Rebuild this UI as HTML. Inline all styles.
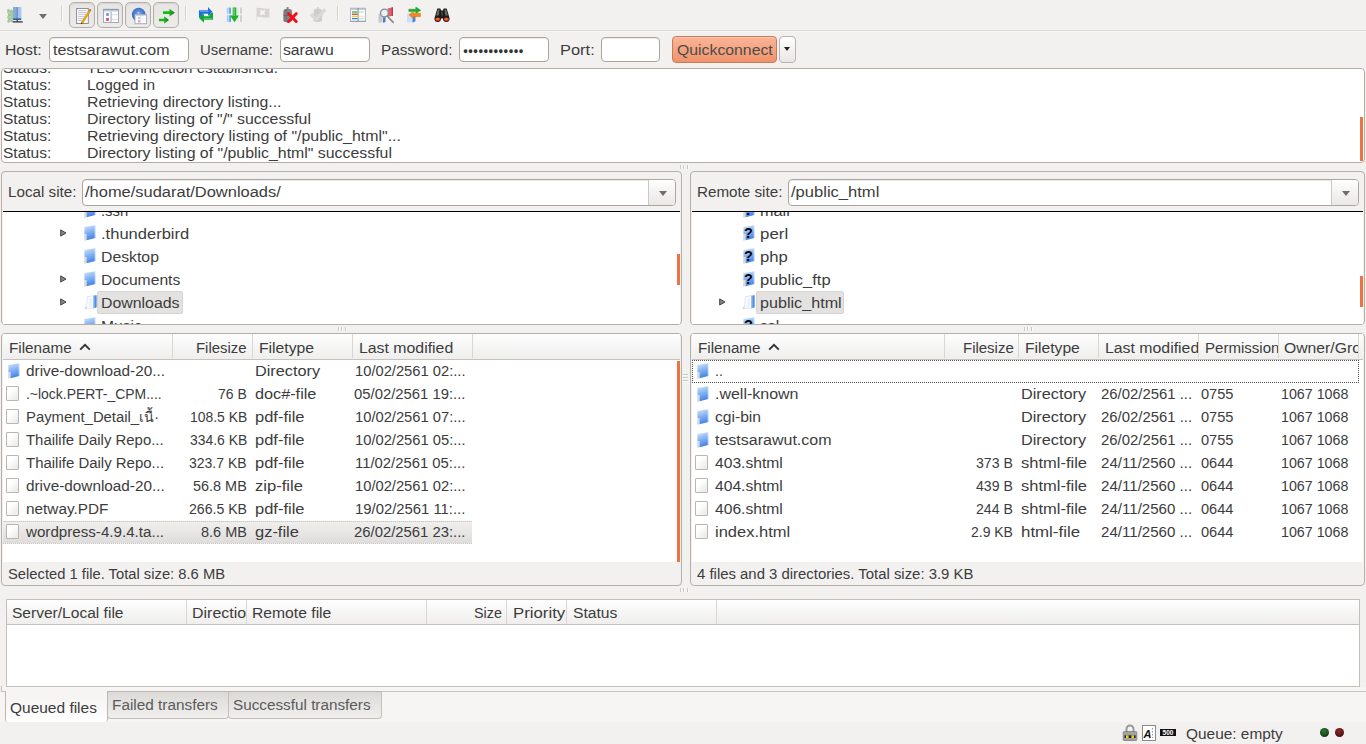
<!DOCTYPE html>
<html><head><meta charset="utf-8"><title>testsarawut.com - FileZilla</title>
<style>
*{box-sizing:border-box;margin:0;padding:0}
html,body{width:1366px;height:744px;overflow:hidden}
body{background:#f2f1f0;font-family:"Liberation Sans","Noto Sans CJK SC",sans-serif;font-size:14px;color:#3c3c3c;position:relative}
.a,.t,.ent,.hdr,.tb,.ico,.fi,.fo,.vsep,.thumb,.panel,.white,.hsep,.clip{position:absolute}
.t{white-space:nowrap;line-height:20px;height:20px;transform-origin:0 50%}
.clip{overflow:hidden;height:22px}
.ent{background:#fff;border:1px solid #aca69e;border-radius:4px;box-shadow:inset 0 1px 1px rgba(0,0,0,.09)}
.panel{border:1px solid #b4afa8;border-radius:4px;background:#f2f1f0}
.white{background:#fff}
.hdr{background:linear-gradient(#fefefe,#efeeed);border-bottom:1px solid #c6c2bd;overflow:hidden}
.hsep{top:0;width:1px;height:24px;background:#dad7d3}
.tb{top:2px;width:26px;height:26px;border:1px solid #b3aea8;border-radius:5px;background:linear-gradient(#e7e5e3,#edebe9);box-shadow:inset 0 1px 2px rgba(0,0,0,.07)}
.vsep{top:6px;width:1px;height:15px;background:#d6d3ce;box-shadow:1px 0 0 #fafaf9}
.ico{width:16px;height:16px;top:7px;overflow:visible}
.thumb{background:#ef7340}
.fi{width:13px;height:15px;border:1px solid #b9b5af;border-radius:1px;background:linear-gradient(135deg,#ffffff 30%,#e9e8e6)}
.fo{width:12px;height:15px}
</style></head><body>
<div id="toolbar">
<div class="a" style="left:0;top:30px;width:1366px;height:1px;background:#dcd9d5"></div><div class="a" style="left:0;top:31px;width:1366px;height:1px;background:#f9f9f8"></div>
<svg class="ico" style="left:7px;top:7px" viewBox="0 0 16 16"><path d="M0.2 2.600l1.500-.900 1.300 1.500 1.700-1 1.600 1.500-.3 2 .9 1.400-.8 1.700.6 1.800-.7 1.600.3 1.700-1.600 1.500-1.400-.9-1.800 1.400-1.300-1.200.9-2.400-1-2 1.100-2.500-1-2.300z" fill="#a3c896"/><path d="M1.300 5.200l2.200 1.600M1.800 10.500l2.500-1.300M3 13.500l1.500-1" stroke="#cfe3c6" stroke-width=".9" fill="none"/><rect x="6.200" y="0" width="8" height="12.900" rx=".7" fill="#9dbde6"/><rect x="6.200" y="0" width="2.800" height="12.900" fill="#86abd9"/><rect x="9.500" y=".2" width="1.300" height="12.500" fill="#4f7fc6"/><rect x="10.800" y=".2" width="3.400" height="12.500" fill="#a9c6ea"/><rect x="6.200" y="11.400" width="8" height="1.600" fill="#2c5ca6"/><rect x="9.600" y="13" width="1.100" height="1.500" fill="#222"/><rect x="5.600" y="14.300" width="10.200" height="1.300" rx=".6" fill="#2b2b2b"/></svg>
<div class="a" style="left:39px;top:14px;width:0;height:0;border-left:4px solid transparent;border-right:4px solid transparent;border-top:5px solid #6e6e6e"></div>
<div class="vsep" style="left:61px"></div>
<div class="tb" style="left:69px"></div>
<div class="tb" style="left:97px"></div>
<div class="tb" style="left:125px"></div>
<div class="tb" style="left:153px"></div>
<svg class="ico" style="left:74px;top:7px" viewBox="0 0 16 16"><rect x="2.600" y="1.500" width="11.700" height="15" fill="#fff" stroke="#8e8e8e" stroke-width="1"/><path d="M4.200 3.600h8.500M4.200 5.500h8.500M4.200 7.400h8M4.200 9.400h7M4.200 11.400h6M4.200 13.400h4.800" stroke="#b9bcd2" stroke-width=".9"/><path d="M15.300 2.900l1.400.8L9 16.200l-1.900.8.400-1.900z" fill="#f7ad08" stroke="#b8810f" stroke-width=".5"/><path d="M15.100 3.200l1.500.9.700-1.300-1.400-.9z" fill="#d8431f"/><path d="M7 17.100l1.700-.7-1.200-1.100z" fill="#3a2a10"/></svg>
<svg class="ico" style="left:102px;top:7px" viewBox="0 0 16 16"><rect x="1.500" y="2.300" width="15" height="13.200" fill="#fff" stroke="#a2abbf" stroke-width="1"/><rect x="1.200" y="2" width="15.600" height="1.600" fill="#8f9cb6"/><rect x="2" y="3.600" width="14" height=".9" fill="#c3cbd9"/><rect x="8.400" y="4.500" width="1.400" height="10.800" fill="#b4bccb"/><rect x="9.800" y="7.300" width="6.200" height=".9" fill="#d5d8df"/><rect x="9.800" y="12.200" width="6.200" height=".9" fill="#d5d8df"/><rect x="1.200" y="15" width="15.600" height=".9" fill="#a2abbf"/><rect x="4.100" y="6.100" width="2.800" height="2.800" fill="#6a9fdb"/><rect x="4.100" y="11" width="2.800" height="2.900" fill="#dc5364"/></svg>
<svg class="ico" style="left:130px;top:7px" viewBox="0 0 16 16"><defs><radialGradient id="gl" cx=".5" cy=".45" r=".6"><stop offset="0" stop-color="#86acea"/><stop offset="1" stop-color="#1f55bd"/></radialGradient></defs><circle cx="8.700" cy="7.600" r="6.800" fill="url(#gl)"/><path d="M7.500 5.200l2 .3-1 1.500z" fill="#e9f0fb"/><rect x="5" y="7.600" width="11.600" height="9.100" fill="#fff" stroke="#a3adc2" stroke-width="1"/><rect x="5.500" y="8" width="10.600" height="1.100" fill="#cdd4e1"/><rect x="10.300" y="9" width=".9" height="7.300" fill="#d2d7e1"/><rect x="8.300" y="10" width="1.300" height="2.200" fill="#86aee2"/><rect x="8.300" y="13.200" width="1.300" height="2.400" fill="#ea6a78"/><rect x="11.800" y="11" width="3.800" height=".6" fill="#dcdfe6"/><rect x="11.800" y="13.600" width="3.800" height=".6" fill="#dcdfe6"/></svg>
<svg class="ico" style="left:158px;top:7px" viewBox="0 0 16 16"><defs><linearGradient id="ga" x1="0" x2="1"><stop offset="0" stop-color="#08c808"/><stop offset=".6" stop-color="#1eb01e"/><stop offset="1" stop-color="#1a6f1a"/></linearGradient></defs><path d="M5 4.300h6.500V1.800l5.300 3.900-5.300 3.900V7.100H5z" fill="url(#ga)"/><path d="M.9 11.700h5.300V9.200l4.800 3.800-4.800 3.800v-2.500H.9z" fill="url(#ga)"/></svg>
<div class="vsep" style="left:185px"></div>
<svg class="ico" style="left:198px;top:7px" viewBox="0 0 16 16"><path d="M1 10.700V3.200h9V0l4.300 4.700L10 9V6.700H4.700v2.200z" fill="#1c6fe4"/><path d="M2 4.200h8.500" stroke="#6aa5f2" stroke-width="1.200"/><path d="M15 5.300v7.500H6v3L1 11.100l5-4.500v2.700h5.300V7z" fill="#12a637"/><path d="M6 11.800h8" stroke="#56d070" stroke-width="1.200"/></svg>
<svg class="ico" style="left:226px;top:7px" viewBox="0 0 16 16"><rect x="0" y=".6" width="5.400" height="14.400" fill="#e4eefa"/><rect x="1.200" y=".6" width="1.300" height="14.400" fill="#9cc2ee"/><rect x="3.300" y=".6" width="1.500" height="14.400" fill="#4f8fe0"/><rect x="11" y=".6" width="5" height="14.400" fill="#f4f4f4"/><rect x="11.400" y=".6" width="1.100" height="14.400" fill="#dcdcdc"/><rect x="14.300" y=".6" width="1.400" height="14.400" fill="#c2c2c2"/><rect x="0" y="6.800" width="16" height="1.400" fill="#f2f1f0"/><path d="M6.700.6h3.600v7.800h2.600L8.500 15.300 4 8.400h2.700z" fill="#1cb526"/><path d="M7.500 1h1.200v8H7.500z" fill="#6fe07a"/></svg>
<svg class="ico" style="left:254px;top:7px" viewBox="0 0 16 16"><path d="M2.200 1.200c3-1.300 5.800 1.300 13 .4l.3 8.600c-6 1.400-9.800-1.500-13-.1z" fill="#d6d3d0"/><path d="M2.500 1v13.500" stroke="#e6e4e2" stroke-width="1"/><path d="M6.200 3.400l4.600 4.400M10.800 3.400L6.200 7.800" stroke="#f6f5f4" stroke-width="1.900"/></svg>
<svg class="ico" style="left:282px;top:7px" viewBox="0 0 16 16"><rect x="4.600" y="0" width="2" height="2.500" fill="#8a8a8a"/><path d="M1.600 4.500c0-2 1.500-2.700 4.200-2.700s4.300.7 4.300 2.700v8.700c0 1.300-1 1.800-4.300 1.800s-4.200-.5-4.200-1.800z" fill="#868686"/><path d="M1.600 4.500c0-2 1.500-2.700 4.200-2.700v13.200c-3.200 0-4.200-.5-4.200-1.800z" fill="#7a7a7a"/><rect x="1.600" y="8" width="8.500" height=".9" fill="#666"/><rect x="4.800" y="15" width="1.600" height=".8" fill="#777"/><path d="M6.600 6.700l7.600 7.800M14.200 6.700l-7.600 7.800" stroke="#ee0f1a" stroke-width="3" stroke-linecap="round"/></svg>
<svg class="ico" style="left:310px;top:7px" viewBox="0 0 16 16"><rect x="7" y="0" width="1.800" height="2.300" fill="#d3d1ce"/><path d="M3.600 4.200c0-1.800 1.400-2.400 4.200-2.400s4.300.6 4.300 2.400v9c0 1.200-1 1.700-4.300 1.700s-4.200-.5-4.200-1.700z" fill="#d0cecb"/><path d="M0 8.300l2.300-1.800L6 10 14 1.800l2 1.700-9.600 11z" fill="#dddbd8" stroke="#cfcdca" stroke-width=".5"/></svg>
<div class="vsep" style="left:337px"></div>
<svg class="ico" style="left:350px;top:7px" viewBox="0 0 16 16"><rect x=".6" y="1.200" width="14.800" height="13.200" fill="#fff" stroke="#a9b0c0" stroke-width=".9"/><rect x=".2" y="13.800" width="15.600" height="1" fill="#8f98ab"/><rect x="1" y="1.400" width="14" height="1.300" fill="#aeb6c8"/><rect x="7.600" y="1" width="1" height="13.500" fill="#7d8699"/><path d="M2 5h5.500" stroke="#2dbb3a" stroke-width="1.300"/><path d="M8.600 5H14" stroke="#bfe8c2" stroke-width="1.300"/><path d="M2 7.200h5.500" stroke="#e23a3a" stroke-width="1.300"/><path d="M2 9.400h5.500" stroke="#f2d21e" stroke-width="1.300"/><path d="M8.600 9.400H14" stroke="#f7eaa0" stroke-width="1.300"/><path d="M2 11.600h5.500" stroke="#2f7fe8" stroke-width="1.300"/><path d="M8.600 11.600H14" stroke="#c5dbf7" stroke-width="1.300"/></svg>
<svg class="ico" style="left:378px;top:7px" viewBox="0 0 16 16"><path d="M9.500 1.500l5.500-1.300v8.600l-5.500 1z" fill="#e0646f"/><path d="M13.500.6L15 .2v8.600l-1.500.3z" fill="#b93a48"/><path d="M.5 7l4-2v10.500l-4 .3z" fill="#c9c9c9"/><path d="M5 10.500l2.500-.5v5l-2.500.8z" fill="#3f7fd6"/><circle cx="6.400" cy="6" r="3.900" fill="#e6f0fa" fill-opacity=".85" stroke="#8a8a8a" stroke-width="1.200"/><path d="M9.200 9l6 6.300" stroke="#8a8a8a" stroke-width="1.700" stroke-linecap="round"/></svg>
<svg class="ico" style="left:406px;top:7px" viewBox="0 0 16 16"><path d="M1 6.500l5.500-1.500v10l-5.500.8z" fill="#cddff5"/><path d="M6.500 9l3-.8v6l-3 1.600z" fill="#4a86d8"/><path d="M2.800 2.200h7V0l5 3.300-5 3.300V4.500h-7z" fill="#22ad2f" stroke="#0f8a1a" stroke-width=".4"/><path d="M14.500 6.300v3.400h-7v2.100L3 8l4.500-3.600v1.900z" fill="#f08a1d" stroke="#c96c0c" stroke-width=".4"/></svg>
<svg class="ico" style="left:434px;top:7px" viewBox="0 0 16 16"><path d="M3.300 1.500h3l.9 2h1.600l.9-2h3l2.800 9.500c.5 2.600-1 4-3.200 4s-3.500-1.300-3.300-3.500H7c.2 2.200-1.100 3.500-3.300 3.500S0 13.600.5 11z" fill="#1d1d1d"/><path d="M3.800 2.500h1.700l-.8 6h-2.500zM10.500 2.500h1.700l1.600 6h-2.500z" fill="#6a6a6a"/><path d="M7 4.500h2v4H7z" fill="#3a3a3a"/><ellipse cx="3.700" cy="12.300" rx="2.500" ry="1.800" fill="#e8381c"/><ellipse cx="12.300" cy="12.300" rx="2.500" ry="1.800" fill="#e8381c"/><ellipse cx="3.700" cy="12" rx="1.400" ry=".8" fill="#f5813a"/><ellipse cx="12.300" cy="12" rx="1.400" ry=".8" fill="#f5813a"/></svg>
</div>
<div id="quick">
<div class="t" style="left:5.13px;top:40.00px;transform:scaleX(1.1237);">Host:</div><div class="ent" style="left:49px;top:37px;width:140px;height:25px"></div>
<div class="t" style="left:52.62px;top:40.00px;transform:scaleX(1.1435);">testsarawut.com</div><div class="t" style="left:199.88px;top:40.00px;transform:scaleX(1.0653);">Username:</div><div class="ent" style="left:280px;top:37px;width:90px;height:25px"></div>
<div class="t" style="left:283.03px;top:40.00px;transform:scaleX(1.1238);">sarawu</div><div class="t" style="left:380.76px;top:40.00px;transform:scaleX(1.0921);">Password:</div><div class="ent" style="left:459px;top:37px;width:90px;height:25px"></div>
<div class="t" style="left:463.24px;top:41.48px;transform:scaleX(0.9277);font-size:9px;color:#333;">●●●●●●●●●●●●</div><div class="t" style="left:559.80px;top:40.00px;transform:scaleX(1.1734);">Port:</div><div class="ent" style="left:601px;top:37px;width:59px;height:25px"></div>
<div class="a" style="left:672px;top:36px;width:105px;height:27px;border:1px solid #c67b5c;border-radius:4px;background:linear-gradient(#fbb597,#f0936b);box-shadow:inset 0 1px 0 rgba(255,255,255,.25)"></div>
<div class="t" style="left:677.13px;top:40.00px;transform:scaleX(1.1286);color:#4c4c4c;">Quickconnect</div><div class="a" style="left:779px;top:36px;width:17px;height:27px;border:1px solid #b9b4ad;border-radius:4px;background:linear-gradient(#fefefe,#e9e7e5)"></div>
<div class="a" style="left:784px;top:47px;width:0;height:0;border-left:3.500px solid transparent;border-right:3.500px solid transparent;border-top:4.500px solid #222"></div>
</div>
<div id="log">
<div class="a" style="left:1px;top:68px;width:1364px;height:95px;border:1px solid #b3aea7;border-radius:4px;background:#fff"></div>
<div class="a" style="left:2px;top:69px;width:1358px;height:11px;overflow:hidden"><div class="t" style="left:0.85px;top:-11.00px;transform:scaleX(1.1081);">Status:</div></div><div class="a" style="left:2px;top:69px;width:1358px;height:11px;overflow:hidden"><div class="t" style="left:84.96px;top:-11.00px;transform:scaleX(1.0852);">TLS connection established.</div></div>
<div class="t" style="left:2.85px;top:75.00px;transform:scaleX(1.1081);">Status:</div><div class="t" style="left:86.95px;top:75.00px;transform:scaleX(1.1054);">Logged in</div>
<div class="t" style="left:2.85px;top:92.00px;transform:scaleX(1.1081);">Status:</div><div class="t" style="left:86.93px;top:92.00px;transform:scaleX(1.1308);">Retrieving directory listing...</div>
<div class="t" style="left:2.85px;top:109.00px;transform:scaleX(1.1081);">Status:</div><div class="t" style="left:86.93px;top:109.00px;transform:scaleX(1.1297);">Directory listing of &quot;/&quot; successful</div>
<div class="t" style="left:2.85px;top:126.00px;transform:scaleX(1.1081);">Status:</div><div class="t" style="left:86.92px;top:126.00px;transform:scaleX(1.1372);">Retrieving directory listing of &quot;/public_html&quot;...</div>
<div class="t" style="left:2.85px;top:143.00px;transform:scaleX(1.1081);">Status:</div><div class="t" style="left:86.93px;top:143.00px;transform:scaleX(1.1334);">Directory listing of &quot;/public_html&quot; successful</div>
<div class="thumb" style="left:1360px;top:117px;width:3px;height:44px"></div>
</div>
<div id="local">
<div class="panel" style="left:1px;top:171px;width:681px;height:154px"></div>
<div class="t" style="left:7.66px;top:182.00px;transform:scaleX(1.0861);">Local site:</div><div class="ent" style="left:82px;top:179px;width:594px;height:27px"></div>
<div class="a" style="left:648px;top:180px;width:27px;height:25px;border-left:1px solid #cbc7c2;border-radius:0 3px 3px 0;background:linear-gradient(#fefefe,#eae8e6)"></div>
<div class="a" style="left:659px;top:191px;width:0;height:0;border-left:4px solid transparent;border-right:4px solid transparent;border-top:5px solid #6e6e6e"></div>
<div class="t" style="left:85.09px;top:182.00px;transform:scaleX(1.1757);">/home/sudarat/Downloads/</div><div class="white" style="left:3px;top:211px;width:677px;height:113px;border-top:1px solid #000"></div>
<div class="a" style="left:3px;top:212px;width:677px;height:112px;overflow:hidden">
<svg class="fo" style="left:80.5px;top:-10px;height:16px" viewBox="0 0 12 16"><defs><linearGradient id="g1" x1="0" y1="0" x2=".25" y2="1"><stop offset="0" stop-color="#d4e6fc"/><stop offset=".45" stop-color="#8fbaf4"/><stop offset="1" stop-color="#4585e6"/></linearGradient></defs><path d="M0 15.700L.4 9l2.300.4v5.900z" fill="#d9d9d9"/><path d="M.4 2.100L11.300.3V13L2.600 15.300V9.300L.4 9z" fill="url(#g1)"/><path d="M10 .5l1.300-.2V13l-1.300.35z" fill="#fff" fill-opacity=".22"/></svg>
<svg class="fo" style="left:80.5px;top:13px;height:16px" viewBox="0 0 12 16"><defs><linearGradient id="g2" x1="0" y1="0" x2=".25" y2="1"><stop offset="0" stop-color="#d4e6fc"/><stop offset=".45" stop-color="#8fbaf4"/><stop offset="1" stop-color="#4585e6"/></linearGradient></defs><path d="M0 15.700L.4 9l2.300.4v5.900z" fill="#d9d9d9"/><path d="M.4 2.100L11.300.3V13L2.600 15.300V9.300L.4 9z" fill="url(#g2)"/><path d="M10 .5l1.300-.2V13l-1.300.35z" fill="#fff" fill-opacity=".22"/></svg>
<svg class="a" style="left:56.5px;top:16.5px;width:7px;height:8px" viewBox="0 0 7 8"><path d="M0.700.9L6 4 .7 7.100z" fill="#858585" stroke="#444" stroke-width="1"/></svg>
<svg class="fo" style="left:80.5px;top:36px;height:16px" viewBox="0 0 12 16"><defs><linearGradient id="g3" x1="0" y1="0" x2=".25" y2="1"><stop offset="0" stop-color="#d4e6fc"/><stop offset=".45" stop-color="#8fbaf4"/><stop offset="1" stop-color="#4585e6"/></linearGradient></defs><path d="M0 15.700L.4 9l2.300.4v5.900z" fill="#d9d9d9"/><path d="M.4 2.100L11.300.3V13L2.600 15.300V9.300L.4 9z" fill="url(#g3)"/><path d="M10 .5l1.300-.2V13l-1.300.35z" fill="#fff" fill-opacity=".22"/></svg>
<svg class="fo" style="left:80.5px;top:59px;height:16px" viewBox="0 0 12 16"><defs><linearGradient id="g4" x1="0" y1="0" x2=".25" y2="1"><stop offset="0" stop-color="#d4e6fc"/><stop offset=".45" stop-color="#8fbaf4"/><stop offset="1" stop-color="#4585e6"/></linearGradient></defs><path d="M0 15.700L.4 9l2.300.4v5.900z" fill="#d9d9d9"/><path d="M.4 2.100L11.300.3V13L2.600 15.300V9.300L.4 9z" fill="url(#g4)"/><path d="M10 .5l1.300-.2V13l-1.300.35z" fill="#fff" fill-opacity=".22"/></svg>
<svg class="a" style="left:56.5px;top:62.5px;width:7px;height:8px" viewBox="0 0 7 8"><path d="M0.700.9L6 4 .7 7.100z" fill="#858585" stroke="#444" stroke-width="1"/></svg>
<div class="a" style="left:94px;top:79px;width:86px;height:23px;background:#e3e2e0;border:1px solid #d6d4d1;border-radius:2px"></div>
<svg class="fo" style="left:81px;top:83px;width:13px" viewBox="0 0 13 15"><path d="M0 13.600l2.300-2.400.5 2.900z" fill="#c9ced8"/><path d="M2.300 13.900L3.400 1.700 9.500.5v12.600z" fill="#fbfcfe" stroke="#d0d6e2" stroke-width=".6"/><path d="M5 3l3-.6v9.800l-3.400.6z" fill="#eef2f9"/><path d="M9.300.7l3.200-.5v12l-3.200 1.300z" fill="#7fb0f0"/><path d="M10.800.4l1.700-.2v12l-1.700.7z" fill="#4f8de6"/></svg>
<svg class="a" style="left:56.5px;top:85.5px;width:7px;height:8px" viewBox="0 0 7 8"><path d="M0.700.9L6 4 .7 7.100z" fill="#858585" stroke="#444" stroke-width="1"/></svg>
<svg class="fo" style="left:80.5px;top:105px;height:16px" viewBox="0 0 12 16"><defs><linearGradient id="g5" x1="0" y1="0" x2=".25" y2="1"><stop offset="0" stop-color="#d4e6fc"/><stop offset=".45" stop-color="#8fbaf4"/><stop offset="1" stop-color="#4585e6"/></linearGradient></defs><path d="M0 15.700L.4 9l2.300.4v5.900z" fill="#d9d9d9"/><path d="M.4 2.100L11.300.3V13L2.600 15.300V9.300L.4 9z" fill="url(#g5)"/><path d="M10 .5l1.300-.2V13l-1.300.35z" fill="#fff" fill-opacity=".22"/></svg>
</div>
<div class="a" style="left:3px;top:212px;width:677px;height:112px;overflow:hidden"><div class="t" style="left:97.98px;top:-11.00px;transform:scaleX(1.0602);">.ssh</div></div><div class="a" style="left:3px;top:212px;width:677px;height:112px;overflow:hidden"><div class="t" style="left:97.89px;top:12.00px;transform:scaleX(1.1807);">.thunderbird</div></div><div class="a" style="left:3px;top:212px;width:677px;height:112px;overflow:hidden"><div class="t" style="left:97.93px;top:35.00px;transform:scaleX(1.1281);">Desktop</div></div><div class="a" style="left:3px;top:212px;width:677px;height:112px;overflow:hidden"><div class="t" style="left:97.94px;top:58.00px;transform:scaleX(1.1202);">Documents</div></div><div class="a" style="left:3px;top:212px;width:677px;height:112px;overflow:hidden"><div class="t" style="left:97.93px;top:81.00px;transform:scaleX(1.1340);">Downloads</div></div><div class="a" style="left:3px;top:212px;width:677px;height:112px;overflow:hidden"><div class="t" style="left:97.94px;top:104.00px;transform:scaleX(1.1193);">Music</div></div><div class="thumb" style="left:677px;top:254px;width:3px;height:31px"></div>
</div>
<div id="remote">
<div class="panel" style="left:690px;top:171px;width:675px;height:154px"></div>
<div class="t" style="left:696.66px;top:182.00px;transform:scaleX(1.0863);">Remote site:</div><div class="ent" style="left:788px;top:179px;width:571px;height:27px"></div>
<div class="a" style="left:1331px;top:180px;width:27px;height:25px;border-left:1px solid #cbc7c2;border-radius:0 3px 3px 0;background:linear-gradient(#fefefe,#eae8e6)"></div>
<div class="a" style="left:1342px;top:191px;width:0;height:0;border-left:4px solid transparent;border-right:4px solid transparent;border-top:5px solid #6e6e6e"></div>
<div class="t" style="left:791.09px;top:182.00px;transform:scaleX(1.1823);">/public_html</div><div class="white" style="left:692px;top:211px;width:671px;height:113px;border-top:1px solid #000"></div>
<div class="a" style="left:692px;top:212px;width:671px;height:112px;overflow:hidden">
<svg class="fo" style="left:50.60000000000002px;top:-10px;height:16px" viewBox="0 0 12 16"><defs><linearGradient id="g6" x1="0" y1="0" x2=".25" y2="1"><stop offset="0" stop-color="#d4e6fc"/><stop offset=".45" stop-color="#8fbaf4"/><stop offset="1" stop-color="#4585e6"/></linearGradient></defs><path d="M0 15.700L.4 9l2.300.4v5.900z" fill="#d9d9d9"/><path d="M.4 2.100L11.300.3V13L2.600 15.300V9.300L.4 9z" fill="url(#g6)"/><path d="M10 .5l1.300-.2V13l-1.300.35z" fill="#fff" fill-opacity=".22"/><text x="5.500" y="13.300" font-family="Liberation Sans,sans-serif" font-weight="bold" font-size="14.500" text-anchor="middle" fill="#050505">?</text></svg>
<svg class="fo" style="left:50.60000000000002px;top:13px;height:16px" viewBox="0 0 12 16"><defs><linearGradient id="g7" x1="0" y1="0" x2=".25" y2="1"><stop offset="0" stop-color="#d4e6fc"/><stop offset=".45" stop-color="#8fbaf4"/><stop offset="1" stop-color="#4585e6"/></linearGradient></defs><path d="M0 15.700L.4 9l2.300.4v5.900z" fill="#d9d9d9"/><path d="M.4 2.100L11.300.3V13L2.600 15.300V9.300L.4 9z" fill="url(#g7)"/><path d="M10 .5l1.300-.2V13l-1.300.35z" fill="#fff" fill-opacity=".22"/><text x="5.500" y="13.300" font-family="Liberation Sans,sans-serif" font-weight="bold" font-size="14.500" text-anchor="middle" fill="#050505">?</text></svg>
<svg class="fo" style="left:50.60000000000002px;top:36px;height:16px" viewBox="0 0 12 16"><defs><linearGradient id="g8" x1="0" y1="0" x2=".25" y2="1"><stop offset="0" stop-color="#d4e6fc"/><stop offset=".45" stop-color="#8fbaf4"/><stop offset="1" stop-color="#4585e6"/></linearGradient></defs><path d="M0 15.700L.4 9l2.300.4v5.900z" fill="#d9d9d9"/><path d="M.4 2.100L11.300.3V13L2.600 15.300V9.300L.4 9z" fill="url(#g8)"/><path d="M10 .5l1.300-.2V13l-1.300.35z" fill="#fff" fill-opacity=".22"/><text x="5.500" y="13.300" font-family="Liberation Sans,sans-serif" font-weight="bold" font-size="14.500" text-anchor="middle" fill="#050505">?</text></svg>
<svg class="fo" style="left:50.60000000000002px;top:59px;height:16px" viewBox="0 0 12 16"><defs><linearGradient id="g9" x1="0" y1="0" x2=".25" y2="1"><stop offset="0" stop-color="#d4e6fc"/><stop offset=".45" stop-color="#8fbaf4"/><stop offset="1" stop-color="#4585e6"/></linearGradient></defs><path d="M0 15.700L.4 9l2.300.4v5.900z" fill="#d9d9d9"/><path d="M.4 2.100L11.300.3V13L2.600 15.300V9.300L.4 9z" fill="url(#g9)"/><path d="M10 .5l1.300-.2V13l-1.300.35z" fill="#fff" fill-opacity=".22"/><text x="5.500" y="13.300" font-family="Liberation Sans,sans-serif" font-weight="bold" font-size="14.500" text-anchor="middle" fill="#050505">?</text></svg>
<div class="a" style="left:64px;top:79px;width:88px;height:23px;background:#e3e2e0;border:1px solid #d6d4d1;border-radius:2px"></div>
<svg class="fo" style="left:50px;top:83px;width:13px" viewBox="0 0 13 15"><path d="M0 13.600l2.300-2.400.5 2.900z" fill="#c9ced8"/><path d="M2.300 13.900L3.400 1.700 9.500.5v12.600z" fill="#fbfcfe" stroke="#d0d6e2" stroke-width=".6"/><path d="M5 3l3-.6v9.800l-3.400.6z" fill="#eef2f9"/><path d="M9.300.7l3.200-.5v12l-3.200 1.300z" fill="#7fb0f0"/><path d="M10.800.4l1.700-.2v12l-1.700.7z" fill="#4f8de6"/></svg>
<svg class="a" style="left:26.5px;top:85.5px;width:7px;height:8px" viewBox="0 0 7 8"><path d="M0.700.9L6 4 .7 7.100z" fill="#858585" stroke="#444" stroke-width="1"/></svg>
<svg class="fo" style="left:50.60000000000002px;top:105px;height:16px" viewBox="0 0 12 16"><defs><linearGradient id="g10" x1="0" y1="0" x2=".25" y2="1"><stop offset="0" stop-color="#d4e6fc"/><stop offset=".45" stop-color="#8fbaf4"/><stop offset="1" stop-color="#4585e6"/></linearGradient></defs><path d="M0 15.700L.4 9l2.300.4v5.900z" fill="#d9d9d9"/><path d="M.4 2.100L11.300.3V13L2.600 15.300V9.300L.4 9z" fill="url(#g10)"/><path d="M10 .5l1.300-.2V13l-1.300.35z" fill="#fff" fill-opacity=".22"/><text x="5.500" y="13.300" font-family="Liberation Sans,sans-serif" font-weight="bold" font-size="14.500" text-anchor="middle" fill="#050505">?</text></svg>
</div>
<div class="a" style="left:692px;top:212px;width:671px;height:112px;overflow:hidden"><div class="t" style="left:67.61px;top:-11.00px;transform:scaleX(1.1603);">mail</div></div><div class="a" style="left:692px;top:212px;width:671px;height:112px;overflow:hidden"><div class="t" style="left:67.57px;top:12.00px;transform:scaleX(1.2054);">perl</div></div><div class="a" style="left:692px;top:212px;width:671px;height:112px;overflow:hidden"><div class="t" style="left:67.58px;top:35.00px;transform:scaleX(1.1916);">php</div></div><div class="a" style="left:692px;top:212px;width:671px;height:112px;overflow:hidden"><div class="t" style="left:67.59px;top:58.00px;transform:scaleX(1.1781);">public_ftp</div></div><div class="a" style="left:692px;top:212px;width:671px;height:112px;overflow:hidden"><div class="t" style="left:67.61px;top:81.00px;transform:scaleX(1.1532);">public_html</div></div><div class="a" style="left:692px;top:212px;width:671px;height:112px;overflow:hidden"><div class="t" style="left:67.64px;top:104.00px;transform:scaleX(1.1229);">ssl</div></div><div class="thumb" style="left:1360px;top:276px;width:3px;height:31px"></div>
</div>
<div id="locallist">
<div class="panel" style="left:1px;top:333px;width:681px;height:253px"></div>
<div class="white" style="left:3px;top:334px;width:677px;height:228px"></div>
<div class="hdr" style="left:3px;top:334px;width:677px;height:26px"><div class="hsep" style="left:169px"></div><div class="hsep" style="left:249px"></div><div class="hsep" style="left:349px"></div><div class="hsep" style="left:469px"></div></div>
<div class="t" style="left:8.66px;top:338.00px;transform:scaleX(1.0882);">Filename</div><svg class="a" style="left:79px;top:343px;width:12px;height:8px" viewBox="0 0 12 8"><path d="M1.200 6.600L6 1.900l4.800 4.700" fill="none" stroke="#333" stroke-width="1.900"/></svg>
<div class="t" style="left:196.48px;top:338.00px;transform:scaleX(1.0647);">Filesize</div><div class="t" style="left:258.64px;top:338.00px;transform:scaleX(1.1223);">Filetype</div><div class="t" style="left:358.53px;top:338.00px;transform:scaleX(1.1316);">Last modified</div>
<svg class="fo" style="left:7.5px;top:363px;height:16px" viewBox="0 0 12 16"><defs><linearGradient id="g11" x1="0" y1="0" x2=".25" y2="1"><stop offset="0" stop-color="#d4e6fc"/><stop offset=".45" stop-color="#8fbaf4"/><stop offset="1" stop-color="#4585e6"/></linearGradient></defs><path d="M0 15.700L.4 9l2.300.4v5.900z" fill="#d9d9d9"/><path d="M.4 2.100L11.300.3V13L2.600 15.300V9.300L.4 9z" fill="url(#g11)"/><path d="M10 .5l1.300-.2V13l-1.300.35z" fill="#fff" fill-opacity=".22"/></svg>
<div class="t" style="left:26.06px;top:361.00px;transform:scaleX(1.0956);">drive-download-20...</div><div class="t" style="left:255.01px;top:361.00px;transform:scaleX(1.1620);">Directory</div><div class="t" style="left:355.29px;top:361.00px;transform:scaleX(1.0516);">10/02/2561 02:...</div>
<div class="fi" style="left:6px;top:386px"></div>
<div class="t" style="left:26.13px;top:384.00px;transform:scaleX(0.9952);">.~lock.PERT-_CPM....</div><div class="t" style="left:217.93px;top:384.00px;transform:scaleX(1.0010);">76 B</div><div class="t" style="left:255.01px;top:384.00px;transform:scaleX(1.1599);">doc#-file</div><div class="t" style="left:354.38px;top:384.00px;transform:scaleX(1.0603);">05/02/2561 19:...</div>
<div class="fi" style="left:6px;top:409px"></div>
<div class="t" style="left:26.08px;top:407.00px;transform:scaleX(1.0610);">Payment_Detail_</div><div class="a" style="left:139px;top:406px;width:20px;height:23px;overflow:hidden"><div class="t" style="left:-0.28px;top:1.00px;transform:scaleX(1.0093);">เนื้·</div></div><div class="t" style="left:189.54px;top:407.00px;transform:scaleX(0.9934);">108.5 KB</div><div class="t" style="left:254.99px;top:407.00px;transform:scaleX(1.1780);">pdf-file</div><div class="t" style="left:355.29px;top:407.00px;transform:scaleX(1.0516);">10/02/2561 07:...</div>
<div class="fi" style="left:6px;top:432px"></div>
<div class="t" style="left:26.08px;top:430.00px;transform:scaleX(1.0656);">Thailife Daily Repo...</div><div class="t" style="left:189.54px;top:430.00px;transform:scaleX(0.9934);">334.6 KB</div><div class="t" style="left:254.99px;top:430.00px;transform:scaleX(1.1780);">pdf-file</div><div class="t" style="left:355.29px;top:430.00px;transform:scaleX(1.0516);">10/02/2561 05:...</div>
<div class="fi" style="left:6px;top:455px"></div>
<div class="t" style="left:26.08px;top:453.00px;transform:scaleX(1.0687);">Thailife Daily Repo...</div><div class="t" style="left:189.23px;top:453.00px;transform:scaleX(0.9988);">323.7 KB</div><div class="t" style="left:254.99px;top:453.00px;transform:scaleX(1.1780);">pdf-file</div><div class="t" style="left:355.48px;top:453.00px;transform:scaleX(1.0603);">11/02/2561 05:...</div>
<div class="fi" style="left:6px;top:478px"></div>
<div class="t" style="left:26.06px;top:476.00px;transform:scaleX(1.0940);">drive-download-20...</div><div class="t" style="left:193.01px;top:476.00px;transform:scaleX(1.0316);">56.8 MB</div><div class="t" style="left:254.99px;top:476.00px;transform:scaleX(1.1842);">zip-file</div><div class="t" style="left:355.29px;top:476.00px;transform:scaleX(1.0516);">10/02/2561 02:...</div>
<div class="fi" style="left:6px;top:501px"></div>
<div class="t" style="left:26.06px;top:499.00px;transform:scaleX(1.0953);">netway.PDF</div><div class="t" style="left:188.83px;top:499.00px;transform:scaleX(1.0059);">266.5 KB</div><div class="t" style="left:254.99px;top:499.00px;transform:scaleX(1.1780);">pdf-file</div><div class="t" style="left:355.48px;top:499.00px;transform:scaleX(1.0603);">19/02/2561 11:...</div>
<div class="a" style="left:3px;top:521px;width:469px;height:23px;background:linear-gradient(#f0efee,#dedddb);border-top:1px dotted #c9c7c4;border-bottom:1px dotted #c9c7c4"></div>
<div class="fi" style="left:6px;top:524px"></div>
<div class="t" style="left:26.07px;top:522.00px;transform:scaleX(1.0818);">wordpress-4.9.4.ta...</div><div class="t" style="left:200.90px;top:522.00px;transform:scaleX(1.0346);">8.6 MB</div><div class="t" style="left:254.99px;top:522.00px;transform:scaleX(1.1753);">gz-file</div><div class="t" style="left:354.38px;top:522.00px;transform:scaleX(1.0603);">26/02/2561 23:...</div>
<div class="thumb" style="left:677px;top:361px;width:3px;height:201px"></div>
<div class="t" style="left:7.69px;top:564.00px;transform:scaleX(1.0537);">Selected 1 file. Total size: 8.6 MB</div></div>
<div id="remotelist">
<div class="panel" style="left:690px;top:333px;width:675px;height:253px"></div>
<div class="white" style="left:692px;top:334px;width:671px;height:228px"></div>
<div class="hdr" style="left:692px;top:334px;width:671px;height:26px"><div class="hsep" style="left:252px"></div><div class="hsep" style="left:326px"></div><div class="hsep" style="left:406px"></div><div class="hsep" style="left:506px"></div><div class="hsep" style="left:586px"></div><div class="hsep" style="left:666px"></div></div>
<div class="t" style="left:697.76px;top:338.00px;transform:scaleX(1.0847);">Filename</div><svg class="a" style="left:768px;top:343px;width:12px;height:8px" viewBox="0 0 12 8"><path d="M1.200 6.600L6 1.900l4.800 4.700" fill="none" stroke="#333" stroke-width="1.900"/></svg>
<div class="t" style="left:962.78px;top:338.00px;transform:scaleX(1.0690);">Filesize</div><div class="t" style="left:1024.64px;top:338.00px;transform:scaleX(1.1181);">Filetype</div><div class="a" style="left:1099px;top:336px;width:99px;height:23px;overflow:hidden"><div class="t" style="left:5.63px;top:2.00px;transform:scaleX(1.1316);">Last modified</div></div><div class="a" style="left:1199px;top:336px;width:79px;height:23px;overflow:hidden"><div class="t" style="left:5.87px;top:2.00px;transform:scaleX(1.0748);">Permissions</div></div><div class="a" style="left:1279px;top:336px;width:79px;height:23px;overflow:hidden"><div class="t" style="left:5.43px;top:2.00px;transform:scaleX(1.1235);">Owner/Group</div></div>
<div class="a" style="left:692px;top:360px;width:667px;height:23px;border:1px dotted #555"></div>
<svg class="fo" style="left:696.5px;top:363px;height:16px" viewBox="0 0 12 16"><defs><linearGradient id="g12" x1="0" y1="0" x2=".25" y2="1"><stop offset="0" stop-color="#d4e6fc"/><stop offset=".45" stop-color="#8fbaf4"/><stop offset="1" stop-color="#4585e6"/></linearGradient></defs><path d="M0 15.700L.4 9l2.300.4v5.900z" fill="#d9d9d9"/><path d="M.4 2.100L11.300.3V13L2.600 15.300V9.300L.4 9z" fill="url(#g12)"/><path d="M10 .5l1.300-.2V13l-1.300.35z" fill="#fff" fill-opacity=".22"/></svg>
<div class="t" style="left:714.82px;top:361.00px;transform:scaleX(1.0094);">..</div>
<svg class="fo" style="left:696.5px;top:386px;height:16px" viewBox="0 0 12 16"><defs><linearGradient id="g13" x1="0" y1="0" x2=".25" y2="1"><stop offset="0" stop-color="#d4e6fc"/><stop offset=".45" stop-color="#8fbaf4"/><stop offset="1" stop-color="#4585e6"/></linearGradient></defs><path d="M0 15.700L.4 9l2.300.4v5.900z" fill="#d9d9d9"/><path d="M.4 2.100L11.300.3V13L2.600 15.300V9.300L.4 9z" fill="url(#g13)"/><path d="M10 .5l1.300-.2V13l-1.300.35z" fill="#fff" fill-opacity=".22"/></svg>
<div class="t" style="left:714.72px;top:384.00px;transform:scaleX(1.1411);">.well-known</div><div class="t" style="left:1020.61px;top:384.00px;transform:scaleX(1.1620);">Directory</div><div class="t" style="left:1100.68px;top:384.00px;transform:scaleX(1.0642);">26/02/2561 ...</div><div class="t" style="left:1200.90px;top:384.00px;transform:scaleX(1.0433);">0755</div><div class="t" style="left:1281.42px;top:384.00px;transform:scaleX(1.0178);">1067 1068</div>
<svg class="fo" style="left:696.5px;top:409px;height:16px" viewBox="0 0 12 16"><defs><linearGradient id="g14" x1="0" y1="0" x2=".25" y2="1"><stop offset="0" stop-color="#d4e6fc"/><stop offset=".45" stop-color="#8fbaf4"/><stop offset="1" stop-color="#4585e6"/></linearGradient></defs><path d="M0 15.700L.4 9l2.300.4v5.900z" fill="#d9d9d9"/><path d="M.4 2.100L11.300.3V13L2.600 15.300V9.300L.4 9z" fill="url(#g14)"/><path d="M10 .5l1.300-.2V13l-1.300.35z" fill="#fff" fill-opacity=".22"/></svg>
<div class="t" style="left:714.74px;top:407.00px;transform:scaleX(1.1156);">cgi-bin</div><div class="t" style="left:1020.61px;top:407.00px;transform:scaleX(1.1620);">Directory</div><div class="t" style="left:1100.68px;top:407.00px;transform:scaleX(1.0642);">26/02/2561 ...</div><div class="t" style="left:1200.90px;top:407.00px;transform:scaleX(1.0433);">0755</div><div class="t" style="left:1281.42px;top:407.00px;transform:scaleX(1.0178);">1067 1068</div>
<svg class="fo" style="left:696.5px;top:432px;height:16px" viewBox="0 0 12 16"><defs><linearGradient id="g15" x1="0" y1="0" x2=".25" y2="1"><stop offset="0" stop-color="#d4e6fc"/><stop offset=".45" stop-color="#8fbaf4"/><stop offset="1" stop-color="#4585e6"/></linearGradient></defs><path d="M0 15.700L.4 9l2.300.4v5.900z" fill="#d9d9d9"/><path d="M.4 2.100L11.300.3V13L2.600 15.300V9.300L.4 9z" fill="url(#g15)"/><path d="M10 .5l1.300-.2V13l-1.300.35z" fill="#fff" fill-opacity=".22"/></svg>
<div class="t" style="left:714.72px;top:430.00px;transform:scaleX(1.1435);">testsarawut.com</div><div class="t" style="left:1020.61px;top:430.00px;transform:scaleX(1.1620);">Directory</div><div class="t" style="left:1100.68px;top:430.00px;transform:scaleX(1.0642);">26/02/2561 ...</div><div class="t" style="left:1200.90px;top:430.00px;transform:scaleX(1.0433);">0755</div><div class="t" style="left:1281.42px;top:430.00px;transform:scaleX(1.0178);">1067 1068</div>
<div class="fi" style="left:695px;top:455px"></div>
<div class="t" style="left:714.74px;top:453.00px;transform:scaleX(1.1172);">403.shtml</div><div class="t" style="left:975.82px;top:453.00px;transform:scaleX(1.0070);">373 B</div><div class="t" style="left:1020.59px;top:453.00px;transform:scaleX(1.1785);">shtml-file</div><div class="t" style="left:1100.67px;top:453.00px;transform:scaleX(1.0776);">24/11/2560 ...</div><div class="t" style="left:1200.90px;top:453.00px;transform:scaleX(1.0433);">0644</div><div class="t" style="left:1281.42px;top:453.00px;transform:scaleX(1.0178);">1067 1068</div>
<div class="fi" style="left:695px;top:478px"></div>
<div class="t" style="left:714.74px;top:476.00px;transform:scaleX(1.1172);">404.shtml</div><div class="t" style="left:975.82px;top:476.00px;transform:scaleX(1.0070);">439 B</div><div class="t" style="left:1020.59px;top:476.00px;transform:scaleX(1.1785);">shtml-file</div><div class="t" style="left:1100.67px;top:476.00px;transform:scaleX(1.0776);">24/11/2560 ...</div><div class="t" style="left:1200.90px;top:476.00px;transform:scaleX(1.0433);">0644</div><div class="t" style="left:1281.42px;top:476.00px;transform:scaleX(1.0178);">1067 1068</div>
<div class="fi" style="left:695px;top:501px"></div>
<div class="t" style="left:714.74px;top:499.00px;transform:scaleX(1.1172);">406.shtml</div><div class="t" style="left:975.82px;top:499.00px;transform:scaleX(1.0070);">244 B</div><div class="t" style="left:1020.59px;top:499.00px;transform:scaleX(1.1785);">shtml-file</div><div class="t" style="left:1100.67px;top:499.00px;transform:scaleX(1.0776);">24/11/2560 ...</div><div class="t" style="left:1200.90px;top:499.00px;transform:scaleX(1.0433);">0644</div><div class="t" style="left:1281.42px;top:499.00px;transform:scaleX(1.0178);">1067 1068</div>
<div class="fi" style="left:695px;top:524px"></div>
<div class="t" style="left:714.69px;top:522.00px;transform:scaleX(1.1787);">index.html</div><div class="t" style="left:970.73px;top:522.00px;transform:scaleX(0.9977);">2.9 KB</div><div class="t" style="left:1020.57px;top:522.00px;transform:scaleX(1.2048);">html-file</div><div class="t" style="left:1100.67px;top:522.00px;transform:scaleX(1.0776);">24/11/2560 ...</div><div class="t" style="left:1200.90px;top:522.00px;transform:scaleX(1.0433);">0644</div><div class="t" style="left:1281.42px;top:522.00px;transform:scaleX(1.0178);">1067 1068</div>
<div class="t" style="left:696.58px;top:564.00px;transform:scaleX(1.0646);">4 files and 3 directories. Total size: 3.9 KB</div></div>
<div id="queue">
<div class="a" style="left:6px;top:599px;width:1354px;height:88px;border:1px solid #c4bfb9;background:#fff"></div>
<div class="hdr" style="left:7px;top:600px;width:1352px;height:25px"><div class="hsep" style="left:179px"></div><div class="hsep" style="left:239px"></div><div class="hsep" style="left:419px"></div><div class="hsep" style="left:499px"></div><div class="hsep" style="left:559px"></div><div class="hsep" style="left:709px"></div></div>
<div class="t" style="left:12.34px;top:603.00px;transform:scaleX(1.1108);">Server/Local file</div><div class="a" style="left:187px;top:601px;width:59px;height:23px;overflow:hidden"><div class="t" style="left:5.42px;top:2.00px;transform:scaleX(1.1395);">Direction</div></div><div class="t" style="left:252.44px;top:603.00px;transform:scaleX(1.1202);">Remote file</div><div class="t" style="left:473.91px;top:603.00px;transform:scaleX(1.0236);">Size</div><div class="t" style="left:512.68px;top:603.00px;transform:scaleX(1.1994);">Priority</div><div class="t" style="left:572.54px;top:603.00px;transform:scaleX(1.1189);">Status</div>
<div class="a" style="left:0;top:691px;width:1366px;height:31px;background:#f6f5f4"></div><div class="a" style="left:2px;top:687px;width:1364px;height:4px;background:#f6f5f4"></div>
<div class="a" style="left:1px;top:691px;width:1365px;height:1px;background:#c6c2bd"></div>
<div class="a" style="left:1px;top:686px;width:1px;height:5px;background:#c6c2bd"></div>
<div class="a" style="left:107px;top:691px;width:122px;height:28px;border:1px solid #c4bfb9;border-top:1px solid #bab5ae;border-radius:0 0 4px 4px;background:linear-gradient(#dcdad7,#f0efed)"></div>
<div class="a" style="left:228px;top:691px;width:154px;height:28px;border:1px solid #c4bfb9;border-top:1px solid #bab5ae;border-radius:0 0 4px 4px;background:linear-gradient(#dcdad7,#f0efed)"></div>
<div class="a" style="left:5px;top:691px;width:103px;height:31px;border:1px solid #bdb8b1;border-top:none;border-bottom:none;border-radius:0 0 3px 3px;background:linear-gradient(#f6f5f4 30%,#fff)"></div>
<div class="t" style="left:9.95px;top:698.00px;transform:scaleX(1.1055);">Queued files</div><div class="t" style="left:111.86px;top:695.00px;transform:scaleX(1.0964);color:#5a5a5a;">Failed transfers</div><div class="t" style="left:232.56px;top:695.00px;transform:scaleX(1.0914);color:#5a5a5a;">Successful transfers</div></div>
<div id="status">
<div class="a" style="left:0;top:722px;width:1366px;height:22px;background:#f2f1f0"></div>
<svg class="a" style="left:1122px;top:724px;width:16px;height:17px" viewBox="0 0 16 17"><path d="M4.500 8V5a3.500 3.500 0 0 1 7 0V8" fill="none" stroke="#9a9a9a" stroke-width="2"/><rect x="1.200" y="7.500" width="13.600" height="9" rx="1" fill="#a2a2a2" stroke="#7d7d7d" stroke-width=".8"/><rect x="2.500" y="11.300" width="11" height="2.700" fill="#222"/><rect x="4" y="11.300" width="2.600" height="2.700" fill="#f0d21e"/><rect x="9.400" y="11.300" width="2.600" height="2.700" fill="#f0d21e"/></svg>
<svg class="a" style="left:1142px;top:725px;width:14px;height:16px" viewBox="0 0 14 16"><rect x=".5" y=".5" width="13" height="15" fill="#fff" stroke="#8a8a8a" stroke-width="1"/><text x="5.500" y="12.500" font-family="Liberation Sans,sans-serif" font-weight="bold" font-style="italic" font-size="11" text-anchor="middle" fill="#111">A</text><path d="M10.500 3v10" stroke="#999" stroke-width="1" stroke-dasharray="1.500 1.500"/></svg>
<svg class="a" style="left:1160px;top:729px;width:16px;height:7px" viewBox="0 0 16 7"><rect width="16" height="7" fill="#111"/><text x="8" y="6" font-family="Liberation Sans,sans-serif" font-weight="bold" font-size="6.500" text-anchor="middle" fill="#fff">500</text></svg>
<div class="t" style="left:1186.05px;top:724.00px;transform:scaleX(1.1007);">Queue: empty</div><div class="a" style="left:1320px;top:728px;width:9px;height:9px;border-radius:5px;background:radial-gradient(circle at 45% 35%,#2f7a38,#0f3a14 75%)"></div>
<div class="a" style="left:1334.500px;top:728px;width:9px;height:9px;border-radius:5px;background:radial-gradient(circle at 45% 35%,#8f2a2a,#4a0d0d 75%)"></div>
</div>
<div class="a" style="left:680.0px;top:165px;width:1px;height:4px;background:#cbc8c4;box-shadow:1px 0 0 #fbfbfa"></div><div class="a" style="left:683.4px;top:165px;width:1px;height:4px;background:#cbc8c4;box-shadow:1px 0 0 #fbfbfa"></div><div class="a" style="left:686.8px;top:165px;width:1px;height:4px;background:#cbc8c4;box-shadow:1px 0 0 #fbfbfa"></div>
<div class="a" style="left:338.0px;top:327px;width:1px;height:4px;background:#cbc8c4;box-shadow:1px 0 0 #fbfbfa"></div><div class="a" style="left:341.4px;top:327px;width:1px;height:4px;background:#cbc8c4;box-shadow:1px 0 0 #fbfbfa"></div><div class="a" style="left:344.8px;top:327px;width:1px;height:4px;background:#cbc8c4;box-shadow:1px 0 0 #fbfbfa"></div>
<div class="a" style="left:1024.0px;top:327px;width:1px;height:4px;background:#cbc8c4;box-shadow:1px 0 0 #fbfbfa"></div><div class="a" style="left:1027.4px;top:327px;width:1px;height:4px;background:#cbc8c4;box-shadow:1px 0 0 #fbfbfa"></div><div class="a" style="left:1030.8px;top:327px;width:1px;height:4px;background:#cbc8c4;box-shadow:1px 0 0 #fbfbfa"></div>
<div class="a" style="left:680.0px;top:588px;width:1px;height:4px;background:#cbc8c4;box-shadow:1px 0 0 #fbfbfa"></div><div class="a" style="left:683.4px;top:588px;width:1px;height:4px;background:#cbc8c4;box-shadow:1px 0 0 #fbfbfa"></div><div class="a" style="left:686.8px;top:588px;width:1px;height:4px;background:#cbc8c4;box-shadow:1px 0 0 #fbfbfa"></div>
<div class="a" style="left:683px;top:374px;width:5px;height:1px;background:#cbc8c4;box-shadow:0 1px 0 #fbfbfa"></div><div class="a" style="left:683px;top:377px;width:5px;height:1px;background:#cbc8c4;box-shadow:0 1px 0 #fbfbfa"></div><div class="a" style="left:683px;top:380px;width:5px;height:1px;background:#cbc8c4;box-shadow:0 1px 0 #fbfbfa"></div>

</body></html>
